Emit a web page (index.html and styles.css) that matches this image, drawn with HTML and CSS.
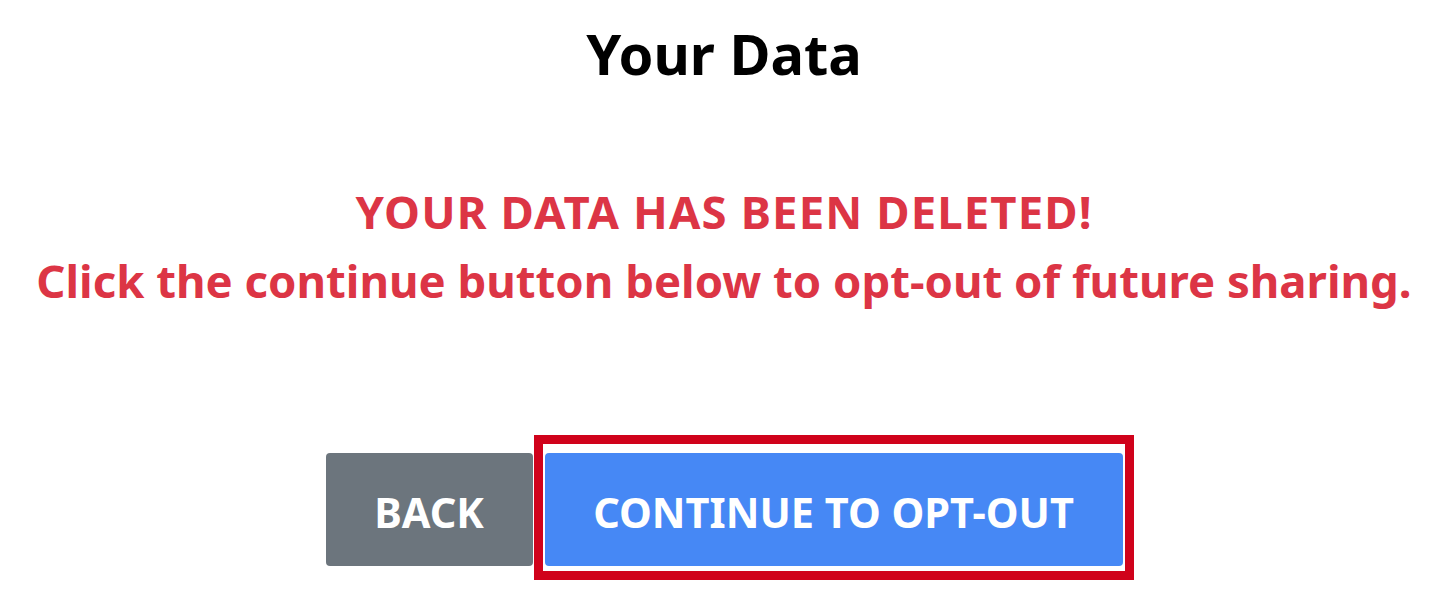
FILE: index.html
```html
<!DOCTYPE html>
<html lang="en">
<head>
    <meta charset="UTF-8">
    <meta name="viewport" content="width=device-width, initial-scale=1.0">
    <title>Your Data</title>
    <link rel="stylesheet" href="styles.css">
</head>
<body>
    <div class="page">
        <h1 class="title">Your Data</h1>

        <div class="notice">
            <p class="notice-head">YOUR DATA HAS BEEN DELETED!</p>
            <p>Click the continue button below to opt-out of future sharing.</p>
        </div>

        <div class="actions">
            <button class="btn btn-back">BACK</button>
            <span class="highlight">
                <button class="btn btn-continue">CONTINUE TO OPT-OUT</button>
            </span>
        </div>
    </div>
</body>
</html>
```

FILE: styles.css
```css
body {
    margin: 0;
    background: #fff;
    font-family: "Noto Sans", "Open Sans", sans-serif;
}
.page {
    padding: 13px 0 60px 14px;
    text-align: center;
}
.title {
    margin: 0;
    font-size: 56px;
    line-height: 80px;
    font-weight: 700;
    color: #000;
}
.notice {
    margin-top: 84px;
    color: #dc3545;
    font-weight: 700;
    font-size: 45.5px;
    line-height: 69px;
}
.notice p {
    margin: 0;
}
.notice-head {
    letter-spacing: 1.1px;
}
.actions {
    display: flex;
    justify-content: center;
    gap: 12px;
    margin-top: 138px;
}
.btn {
    height: 113px;
    padding: 4px 0 0;
    border: none;
    border-radius: 4px;
    color: #fff;
    font-family: inherit;
    font-weight: 700;
    font-size: 41.5px;
    cursor: pointer;
}
.btn-back {
    width: 207px;
    background: #6c757d;
}
.btn-continue {
    width: 578px;
    background: #4688f5;
}
.highlight {
    position: relative;
    display: block;
}
.highlight::after {
    content: "";
    position: absolute;
    left: -11px;
    right: -11px;
    top: -18px;
    bottom: -14px;
    border: 9px solid #d0021b;
    pointer-events: none;
}
```
